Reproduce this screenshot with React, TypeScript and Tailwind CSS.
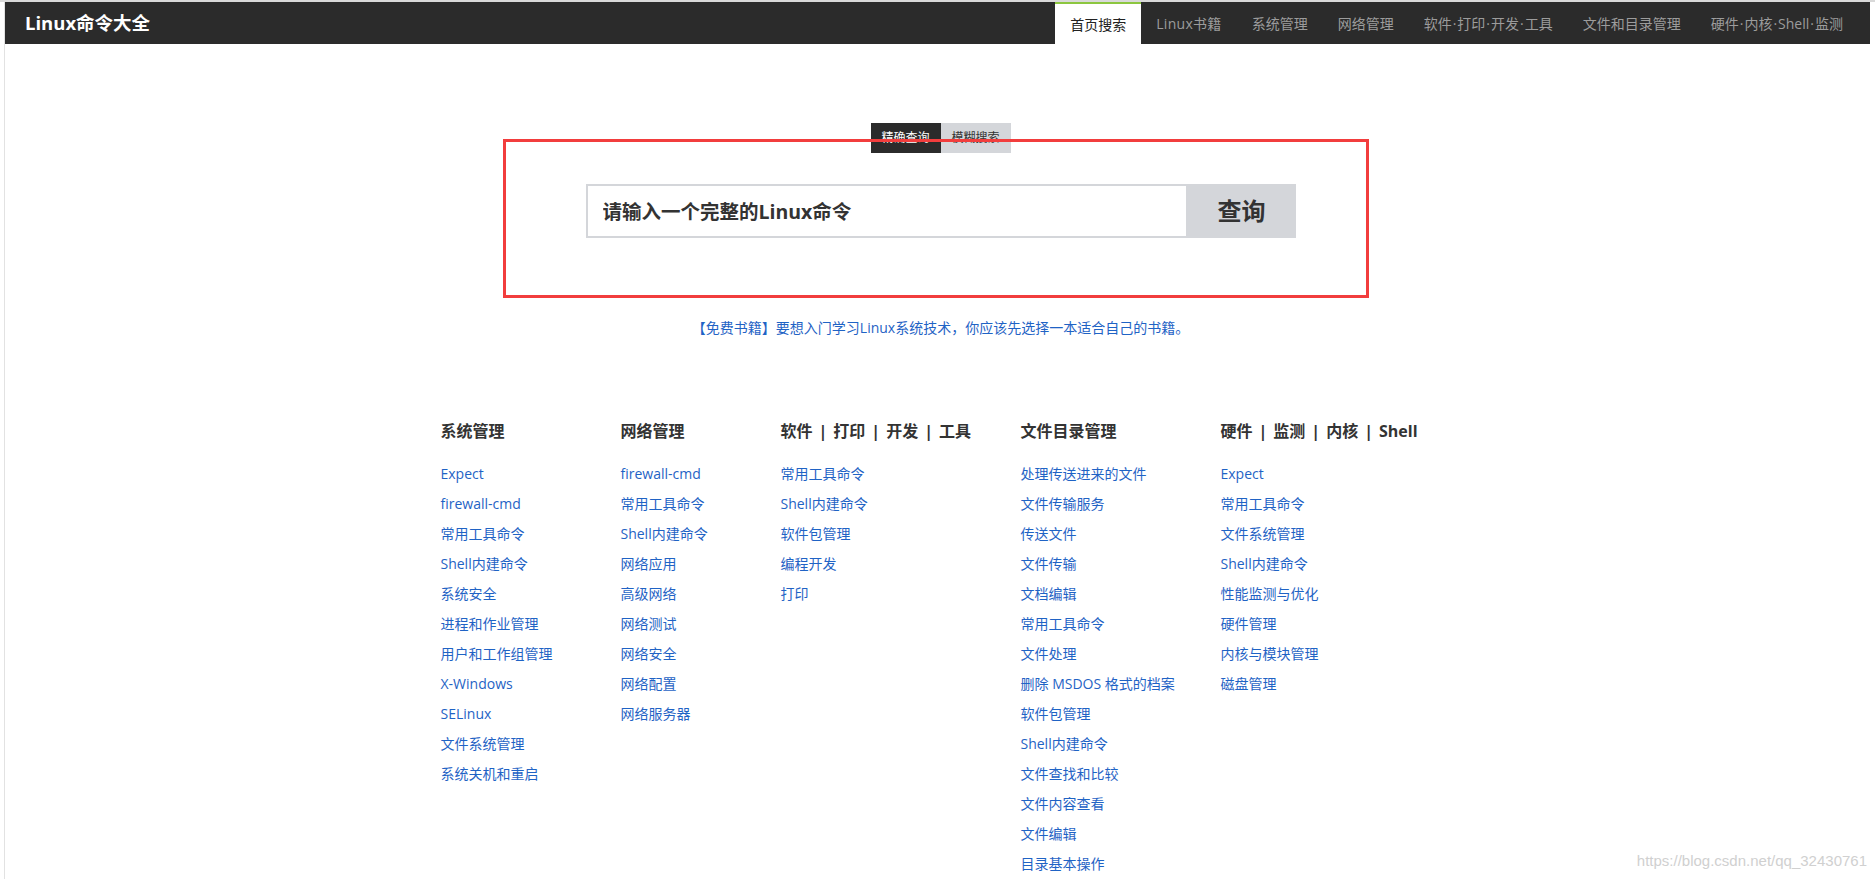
import React, { useState } from 'react';

const navItems = ['首页搜索', 'Linux书籍', '系统管理', '网络管理', '软件·打印·开发·工具', '文件和目录管理', '硬件·内核·Shell·监测'];

const columns: { title: string[]; width: string; links: string[] }[] = [
  {
    title: ['系统管理'],
    width: 'w-[180px]',
    links: ['Expect', 'firewall-cmd', '常用工具命令', 'Shell内建命令', '系统安全', '进程和作业管理', '用户和工作组管理', 'X-Windows', 'SELinux', '文件系统管理', '系统关机和重启'],
  },
  {
    title: ['网络管理'],
    width: 'w-[160px]',
    links: ['firewall-cmd', '常用工具命令', 'Shell内建命令', '网络应用', '高级网络', '网络测试', '网络安全', '网络配置', '网络服务器'],
  },
  {
    title: ['软件', '打印', '开发', '工具'],
    width: 'w-[240px]',
    links: ['常用工具命令', 'Shell内建命令', '软件包管理', '编程开发', '打印'],
  },
  {
    title: ['文件目录管理'],
    width: 'w-[200px]',
    links: ['处理传送进来的文件', '文件传输服务', '传送文件', '文件传输', '文档编辑', '常用工具命令', '文件处理', '删除 MSDOS 格式的档案', '软件包管理', 'Shell内建命令', '文件查找和比较', '文件内容查看', '文件编辑', '目录基本操作'],
  },
  {
    title: ['硬件', '监测', '内核', 'Shell'],
    width: 'flex-1',
    links: ['Expect', '常用工具命令', '文件系统管理', 'Shell内建命令', '性能监测与优化', '硬件管理', '内核与模块管理', '磁盘管理'],
  },
];

// nav labels use a slightly wider middle dot, as in the original
const NavLabel = ({ text }: { text: string }) => {
  const parts = text.split('·');
  return (
    <>
      {parts.map((p, i) => (
        <React.Fragment key={i}>
          {i > 0 && <span className="mx-[1px]">·</span>}
          {p}
        </React.Fragment>
      ))}
    </>
  );
};

const App: React.FC = () => {
  const [mode, setMode] = useState<'exact' | 'fuzzy'>('exact');

  return (
    <div className="relative min-h-screen bg-white border-t-2 border-[#d9d9d9] font-['Open_Sans','Noto_Sans_CJK_SC',sans-serif]">
      <div className="ml-[4px] mr-[5px] min-h-screen border-l border-[#e2e2e2]">
        {/* Header */}
        <header className="h-[42px] bg-[#2b2b2b] flex justify-between pl-5 pr-3">
          <div className="flex items-center text-white font-bold text-[18.5px]">Linux命令大全</div>
          <nav className="flex">
            {navItems.map((item, i) => (
              <a
                key={item}
                href="#"
                className={`flex items-center px-[15px] text-[14px] ${
                  i === 0 ? 'bg-white text-[#222] border-t-2 border-[#8cc63f]' : 'text-[#9c9c9c]'
                } ${item === 'Linux书籍' ? 'tracking-[0.3px]' : ''}`}
              >
                <NavLabel text={item} />
              </a>
            ))}
          </nav>
        </header>

        <main className="pl-[6px]">
          {/* Search tabs */}
          <div className="mt-[79px] flex justify-center">
            <button
              onClick={() => setMode('exact')}
              className={`w-[70px] h-[30px] text-[12px] ${mode === 'exact' ? 'bg-[#2b2b2b] text-white' : 'bg-[#d4d6da] text-[#333]'}`}
            >
              精确查询
            </button>
            <button
              onClick={() => setMode('fuzzy')}
              className={`w-[70px] h-[30px] text-[12px] ${mode === 'fuzzy' ? 'bg-[#2b2b2b] text-white' : 'bg-[#d4d6da] text-[#333]'}`}
            >
              模糊搜索
            </button>
          </div>

          {/* Search box */}
          <div className="mt-[31px] flex justify-center">
            <input
              type="text"
              placeholder="请输入一个完整的Linux命令"
              className="w-[602px] h-[54px] border-2 border-[#d4d6da] px-[15px] text-[19.5px] font-bold text-[#333] outline-none placeholder:text-[#333]"
            />
            <button className="w-[108px] h-[54px] bg-[#d4d6da] text-[24px] font-bold text-[#333]">查询</button>
          </div>

          <p className="mt-[80px] text-center text-[14px] leading-[20px] text-[#1f63c5]">
            <a href="#">【免费书籍】要想入门学习Linux系统技术，你应该先选择一本适合自己的书籍。</a>
          </p>

          {/* Categories */}
          <div className="mt-[78px] w-[1000px] mx-auto flex">
            {columns.map((col) => (
              <div key={col.title.join()} className={col.width}>
                <h3 className="text-[16px] leading-[30px] font-bold text-[#333] mb-[13px] whitespace-nowrap">
                  {col.title.map((t, i) => (
                    <span key={t}>
                      {i > 0 && <span className="mx-[6px]">|</span>}
                      {t}
                    </span>
                  ))}
                </h3>
                <ul>
                  {col.links.map((l) => (
                    <li key={l} className="h-[30px] leading-[30px] text-[14px] whitespace-nowrap">
                      <a href="#" className="text-[#1f63c5]">{l}</a>
                    </li>
                  ))}
                </ul>
              </div>
            ))}
          </div>
        </main>
      </div>

      {/* annotation box */}
      <div className="absolute left-[503px] top-[137px] w-[866px] h-[159px] border-[3px] border-[#f23d3d] pointer-events-none" />

      {/* watermark */}
      <div className="absolute right-[8px] top-[848px] text-[15px] text-[#d0d0d0] font-['Liberation_Sans',sans-serif] pointer-events-none">
        https://blog.csdn.net/qq_32430761
      </div>
    </div>
  );
};

export default App;
